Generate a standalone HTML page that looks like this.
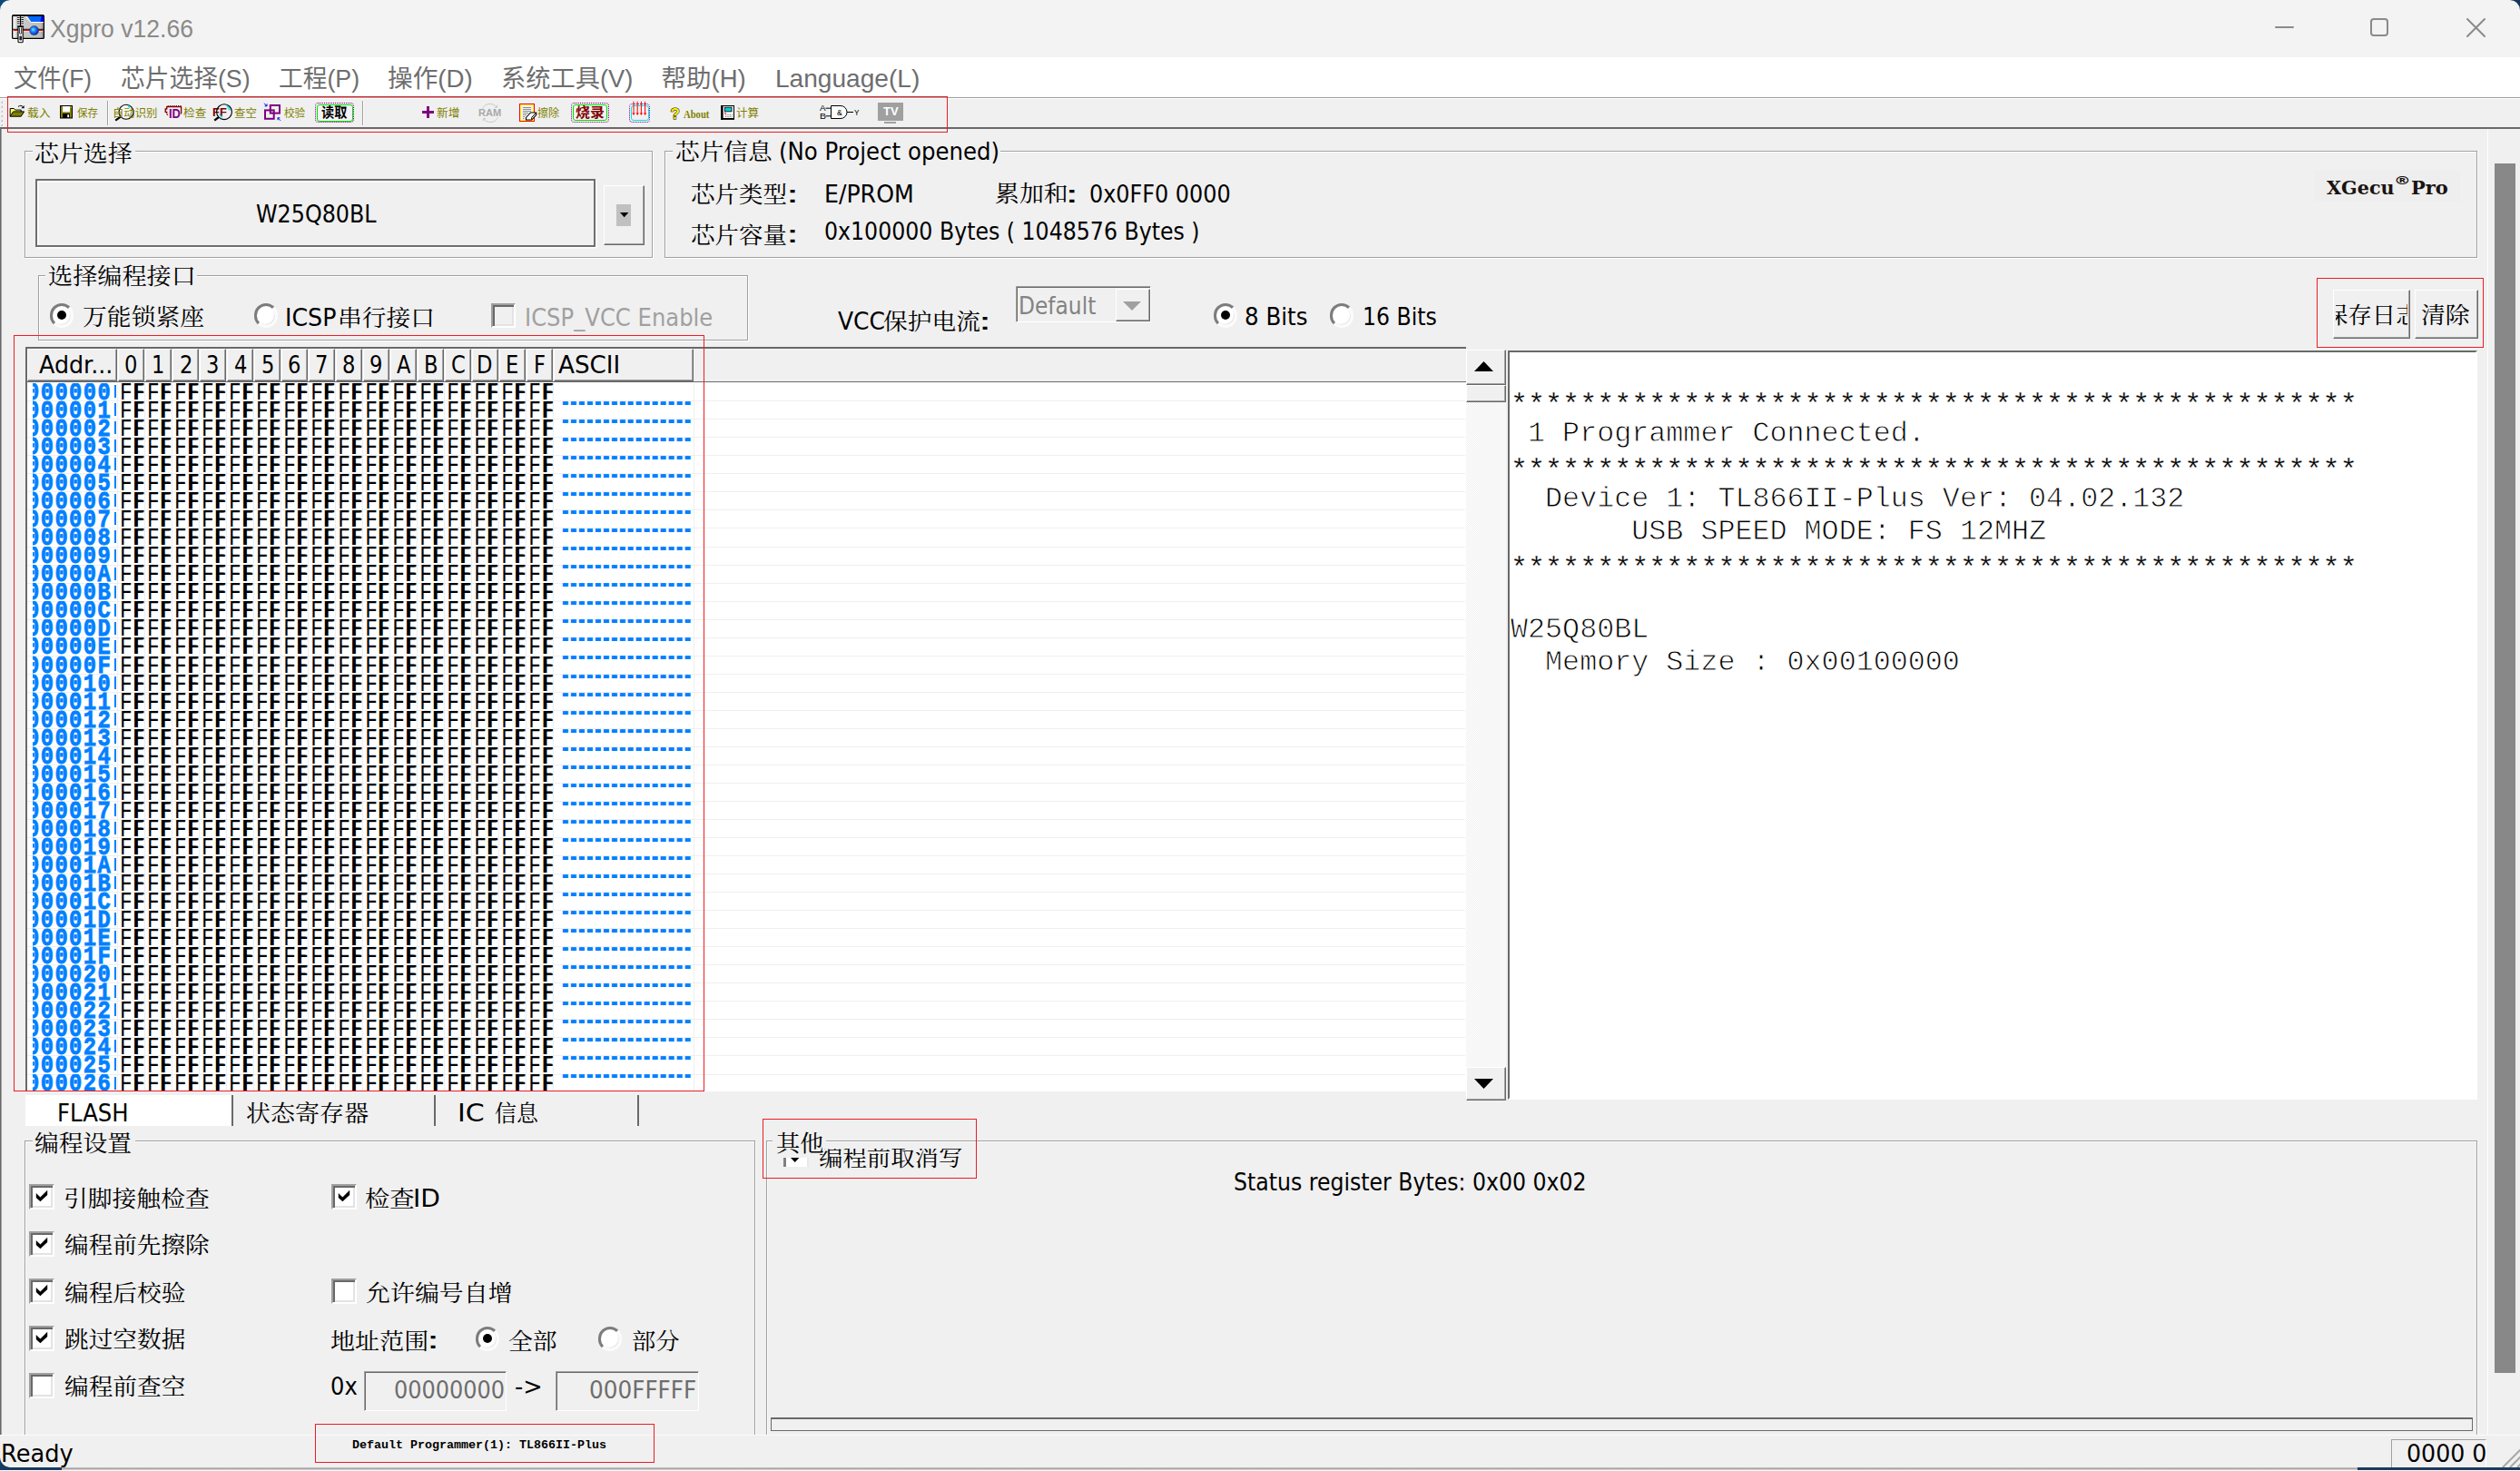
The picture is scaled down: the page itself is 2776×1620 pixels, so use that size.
<!DOCTYPE html>
<html lang="zh"><head><meta charset="utf-8"><title>Xgpro v12.66</title>
<style>
html,body{margin:0;padding:0}
body{width:2776px;height:1620px;overflow:hidden;background:#f0f0f0;position:relative;font-family:'DejaVu Sans','Liberation Sans',sans-serif}
div{position:absolute;box-sizing:border-box}
.t{white-space:pre;line-height:1;margin-top:-80px;transform-origin:0 80px}
.t::before{content:"";display:inline-block;height:80px;width:0}
.grp{border:1px solid #a0a0a0;box-shadow:1px 1px 0 #fff,inset 1px 1px 0 #fff}
.lab{background:#f0f0f0}
.sunk{border:2px solid #6e6e6e;box-shadow:1.5px 1.5px 0 #fff,inset 1.5px 1.5px 0 #fff}
.sunk1{border:1px solid;border-color:#a0a0a0 #fff #fff #a0a0a0;box-shadow:inset 1px 1px 0 #696969}
.btn{background:#f0f0f0;border:1px solid;border-color:#fff #696969 #696969 #fff;box-shadow:inset -1px -1px 0 #a0a0a0}
.red{border:1px solid #ed1c24}
.hd{background:#f0f0f0;border:1px solid;border-color:#fff #696969 #696969 #fff;box-shadow:inset -1px -1px 0 #a0a0a0}
.radio{border-radius:50%;background:#fff;border:3px solid;border-color:#7c7c7c #fbfbfb #fbfbfb #7c7c7c;box-shadow:inset -1px -1px 0 #e6e6e6}
.radio i{position:absolute;left:50%;top:50%;width:10px;height:10px;margin:-5px 0 0 -5px;border-radius:50%;background:#000}
.cb{background:#fff;border:2px solid;border-color:#a0a0a0 #fff #fff #a0a0a0;box-shadow:inset 2px 2px 0 #696969,inset -2px -2px 0 #e3e3e3}
svg{position:absolute;overflow:visible}

.lg{font-family:'Liberation Mono',monospace;font-size:31.73px;color:#000;-webkit-text-stroke:.85px #fff}
.st{-webkit-text-stroke:.25px #fff}
.row{left:0;width:740px;height:26px}
.row .t{top:18.8px}
.adc{left:5.5px;top:0;width:92px;height:22px;overflow:hidden}
.ad{left:-6.5px;font-family:'Liberation Mono',monospace;font-weight:700;font-size:27px;color:#0080ff;-webkit-text-stroke:.8px #0080ff;transform:scaleX(.88);letter-spacing:1.64px}
.hx{left:102px;font-family:'Liberation Mono',monospace;font-size:27px;color:#000;transform:scaleX(.845);letter-spacing:1.549px}
.hx b{font-weight:400;display:inline-block;transform:scaleX(.84);transform-origin:0 0;margin-left:-1.2px;margin-right:1.2px;text-shadow:1.4px 0 0 #000,2.8px 0 0 #000}
.row .as{left:580.3px;top:24.8px;font-family:'Liberation Mono',monospace;font-weight:700;font-size:26.7px;color:#0080ff;letter-spacing:-10.4px;transform:scaleX(1.6)}
.bar{position:absolute;left:96px;top:3px;width:1.5px;height:14px;background:#0080ff}
</style></head>
<body>
<div style="left:0px;top:0px;width:2776px;height:63px;background:#f3f3f3"></div>
<div style="left:0px;top:63px;width:2776px;height:44px;background:#fff"></div>
<div style="left:0px;top:107px;width:2776px;height:1px;background:#a0a0a0"></div>
<div style="left:0px;top:108px;width:2776px;height:1px;background:#fff"></div>
<div style="left:0px;top:140px;width:2776px;height:2px;background:#696969"></div>
<div style="left:0px;top:142px;width:1px;height:1438px;background:#696969"></div>
<div style="left:1px;top:142px;width:1px;height:1438px;background:#a0a0a0"></div>
<div style="left:2740px;top:142px;width:1px;height:1438px;background:#fff"></div>
<div style="left:2748px;top:180px;width:23px;height:1332px;background:#888"></div>
<svg style="left:11px;top:13px" width="42" height="37" viewBox="11 13 42 37">
<defs><linearGradient id="gb" x1="0" x2="1" y1="0" y2="0"><stop offset="0" stop-color="#f4f4f4"/><stop offset=".1" stop-color="#e8e8e8"/><stop offset=".16" stop-color="#a8a8a8"/><stop offset=".42" stop-color="#c8c8c8"/><stop offset=".9" stop-color="#bdbdbd"/><stop offset="1" stop-color="#8a8a8a"/></linearGradient>
<radialGradient id="gs" cx=".4" cy=".4" r=".65"><stop offset="0" stop-color="#7fe6ff"/><stop offset=".35" stop-color="#1f8fff"/><stop offset=".8" stop-color="#0a3fd8"/><stop offset="1" stop-color="#08206a"/></radialGradient></defs>
<rect x="12" y="15" width="38" height="29" rx="2" fill="#fff"/><rect x="18" y="40" width="9.6" height="8.4" rx="1.5" fill="#fff"/>
<rect x="13.6" y="16.6" width="34.8" height="25.8" rx="1.2" fill="url(#gb)" stroke="#000" stroke-width="1.3"/>
<rect x="14" y="16" width="34" height="1.9" fill="#000"/>
<path d="M30.5 17.9H48V24H33.8z" fill="#0068ff"/><path d="M45.6 17.9H48V24H44.4z" fill="#0000f0"/><path d="M33.8 24H48v1H34.4z" fill="#fffdf0"/>
<path d="M28.3 18l5.4 6.2" stroke="#f0f0f0" stroke-width="1.2"/>
<rect x="14" y="31.8" width="34" height="1" fill="#111"/><rect x="15" y="32.9" width="32" height="1.2" fill="#ff0000"/><rect x="15" y="34.1" width="32" height=".8" fill="#d8f0f0"/>
<circle cx="37.6" cy="33.6" r="5" fill="url(#gs)" stroke="#3a2a20" stroke-width=".5"/>
<rect x="18.8" y="17.9" width="7.4" height="10.6" fill="#fff"/>
<path d="M19 19.4h2.6M19 21.6h2.6M19 23.8h2.6M19 26h2.6M23.4 19.4h2.6M23.4 21.6h2.6M23.4 23.8h2.6M23.4 26h2.6" stroke="#000" stroke-width="1"/><rect x="21.9" y="17.9" width="1.3" height="10.6" fill="#000"/>
<path d="M18.8 28.2h7.4l-1.6 2h-4.2z" fill="#000"/>
<path d="M20 29.4h5.2v16.6q0 .8-.8.8h-3.6q-.8 0-.8-.8z" fill="#fff" stroke="#000" stroke-width="1.1"/>
<path d="M21.6 30.5v6.4q1 1 2 0v-6.4" fill="none" stroke="#000" stroke-width=".8"/><rect x="21.4" y="39.6" width="2.6" height="5" rx="1" fill="#222"/>
</svg>
<div class="t" style="left:54.53px;top:40.50px;font-family:'Liberation Sans','Noto Sans CJK SC',sans-serif;font-size:27.5px;color:#8a8a8a;transform:scaleX(0.9660);">Xgpro v12.66</div>
<svg style="left:2490px;top:10px" width="270" height="44" viewBox="2490 10 270 44" fill="none" stroke="#8a8a8a" stroke-width="2" stroke-linecap="round"><path d="M2507 30H2526"/><rect x="2612" y="21" width="18" height="18" rx="3"/><path d="M2718 21L2737 40M2737 21L2718 40"/></svg>
<div class="t" style="left:14.55px;top:95.50px;font-family:'Liberation Sans','Noto Sans CJK SC',sans-serif;font-size:27.5px;color:#6e6e6e;transform:scaleX(0.9545);">文件(F)</div>
<div class="t" style="left:133.03px;top:95.50px;font-family:'Liberation Sans','Noto Sans CJK SC',sans-serif;font-size:27.5px;color:#6e6e6e;transform:scaleX(0.9722);">芯片选择(S)</div>
<div class="t" style="left:307.03px;top:95.50px;font-family:'Liberation Sans','Noto Sans CJK SC',sans-serif;font-size:27.5px;color:#6e6e6e;transform:scaleX(0.9719);">工程(P)</div>
<div class="t" style="left:426.99px;top:95.50px;font-family:'Liberation Sans','Noto Sans CJK SC',sans-serif;font-size:27.5px;color:#6e6e6e;transform:scaleX(1.0055);">操作(D)</div>
<div class="t" style="left:551.77px;top:95.50px;font-family:'Liberation Sans','Noto Sans CJK SC',sans-serif;font-size:27.5px;color:#6e6e6e;transform:scaleX(0.9913);">系统工具(V)</div>
<div class="t" style="left:728.50px;top:95.50px;font-family:'Liberation Sans','Noto Sans CJK SC',sans-serif;font-size:27.5px;color:#6e6e6e;">帮助(H)</div>
<div class="t" style="left:853.71px;top:95.50px;font-family:'Liberation Sans','Noto Sans CJK SC',sans-serif;font-size:27.5px;color:#6e6e6e;transform:scaleX(1.0214);">Language(L)</div>
<svg style="left:0;top:0" width="10" height="145" fill="#b4b4b4"><path d="M0.8 113.5l2.2 -2.2v2.2z"/><path d="M0.8 118.55l2.2 -2.2v2.2z"/><path d="M0.8 123.6l2.2 -2.2v2.2z"/><path d="M0.8 128.65l2.2 -2.2v2.2z"/><path d="M0.8 133.7l2.2 -2.2v2.2z"/><path d="M0.8 138.75l2.2 -2.2v2.2z"/></svg>
<svg style="left:10px;top:114px" width="19" height="17" viewBox="0 0 19 17">
<path d="M1.2 14.2V5.5h4.2l1.4 1.6h6.4v2.2" fill="#ffff66" stroke="#000" stroke-width="1"/>
<path d="M1.2 14.2L4.6 8.9H16.6L13.2 14.2Z" fill="#808000" stroke="#000" stroke-width="1"/>
<path d="M10 3.6c1.6-1.7 4-1.6 5.6.3" fill="none" stroke="#000" stroke-width="1"/><path d="M16.6 2v3.2h-3.2z" fill="#000"/>
</svg>
<div class="t" style="left:29.94px;top:129.30px;font-family:'Liberation Sans','Noto Sans CJK SC',sans-serif;font-size:12px;color:#808000;transform:scaleX(1.0636);">载入</div>
<svg style="left:66px;top:116px" width="14" height="14.5" viewBox="0 0 14 14.5">
<rect x="0.5" y="0.5" width="13" height="13.5" fill="#808000" stroke="#000"/>
<rect x="3" y="1" width="8" height="6.3" fill="#fff"/><rect x="3" y="9" width="8" height="5" fill="#000"/><rect x="8.3" y="10.2" width="1.8" height="3" fill="#fff"/><rect x="11.6" y="1.5" width="1" height="1" fill="#fff"/>
</svg>
<div class="t" style="left:85.30px;top:129.30px;font-family:'Liberation Sans','Noto Sans CJK SC',sans-serif;font-size:12px;color:#808000;transform:scaleX(0.9583);">保存</div>
<div style="left:118px;top:111px;width:1px;height:27px;background:#a0a0a0"></div>
<div style="left:119px;top:111px;width:1px;height:27px;background:#fff"></div>
<svg style="left:125px;top:113px" width="26" height="22" viewBox="125 113 26 22">
<circle cx="139" cy="123.3" r="8" fill="#f6f6f6" stroke="#000" stroke-width="1.1"/><path d="M141 116.2l1.8 2.2" stroke="#00e5ee" stroke-width="1.6"/><path d="M132.8 128.6L127.2 132.6" stroke="#000" stroke-width="2.2"/></svg>
<div class="t" style="left:123.74px;top:129.30px;font-family:'Liberation Sans','Noto Sans CJK SC',sans-serif;font-size:12px;color:#808000;transform:scaleX(1.0311);">自动识别</div>
<svg style="left:181px;top:115px" width="20" height="15" viewBox="181 115 20 15">
<path d="M199.6 125.6V117.7H183.7V120H182.2V123.4H183.7V125.2M183.7 126.4h1.4" fill="none" stroke="#800000" stroke-width="1.3"/>
<path d="M184.6 116.5H199.4" fill="none" stroke="#800000" stroke-width="1.1" stroke-dasharray="1.2 1.1"/>
</svg>
<div class="t" style="left:185.55px;top:130.00px;font-family:'Liberation Sans',sans-serif;font-size:15.2px;color:#800080;font-weight:700;transform:scaleX(0.8500);">ID</div>
<div class="t" style="left:201.75px;top:129.30px;font-family:'Liberation Sans','Noto Sans CJK SC',sans-serif;font-size:12px;color:#808000;transform:scaleX(1.0545);">检查</div>
<div class="t" style="left:233.84px;top:127.80px;font-family:'Liberation Sans',sans-serif;font-size:13.5px;color:#800000;font-weight:700;transform:scaleX(0.9600);">FF</div>
<svg style="left:233px;top:113px" width="26" height="22" viewBox="233 113 26 22">
<circle cx="247" cy="123.2" r="8.4" fill="none" stroke="#000" stroke-width="1.1"/><path d="M249.6 116.4c2 1.2 3 3 3.4 5" stroke="#00e5ee" stroke-width="1.6" fill="none"/><path d="M241.7 125.5c.6 1.6 1.7 3 3.2 3.8" stroke="#00e5ee" stroke-width="1.2" fill="none"/><path d="M241 129L236.2 132.6" stroke="#000" stroke-width="2.2"/></svg>
<div class="t" style="left:257.96px;top:129.30px;font-family:'Liberation Sans','Noto Sans CJK SC',sans-serif;font-size:12px;color:#808000;transform:scaleX(1.0364);">查空</div>
<svg style="left:290px;top:113px" width="21" height="21" viewBox="290 113 21 21">
<rect x="297.8" y="116" width="10.2" height="8.6" fill="none" stroke="#800080" stroke-width="2"/><rect x="292" y="121.4" width="9.7" height="9.4" fill="none" stroke="#800080" stroke-width="2"/>
<path d="M291 113.8l3 3m0-2.4v2.4h-2.4" stroke="#0000ff" stroke-width="1" fill="none"/><path d="M309 132.8l-3-3m0 2.4v-2.4h2.4" stroke="#0000ff" stroke-width="1" fill="none"/></svg>
<div class="t" style="left:312.80px;top:129.30px;font-family:'Liberation Sans','Noto Sans CJK SC',sans-serif;font-size:12px;color:#808000;transform:scaleX(0.9667);">校验</div>
<div style="left:347px;top:113px;width:43px;height:22px;border:1.5px dotted #800080;border-radius:4px"></div>
<div style="left:348.5px;top:114.5px;width:40px;height:19px;border:1px solid #00e000;border-radius:3px;background:#f4f4f4"></div>
<div class="t" style="left:354.30px;top:129.00px;font-family:'Liberation Sans','Noto Sans CJK SC',sans-serif;font-size:14.5px;color:#000;font-weight:700;transform:scaleX(0.9759);">读取</div>
<div style="left:399px;top:111px;width:1px;height:27px;background:#a0a0a0"></div>
<div style="left:400px;top:111px;width:1px;height:27px;background:#fff"></div>
<div style="left:465px;top:122px;width:13px;height:3px;background:#800080"></div>
<div style="left:470px;top:117px;width:3px;height:13px;background:#800080"></div>
<div class="t" style="left:480.64px;top:129.30px;font-family:'Liberation Sans','Noto Sans CJK SC',sans-serif;font-size:12px;color:#808000;transform:scaleX(1.0591);">新增</div>
<svg style="left:527px;top:113px" width="26" height="23" viewBox="527 113 26 23">
<path d="M531.5 119.5a9.3 9.3 0 0 1 15.5-1.6M548.5 129.5a9.3 9.3 0 0 1 -15.5 1.6" fill="none" stroke="#c8c8c8" stroke-width="1"/><path d="M547.6 115.6v2.8h-2.8M532.4 133.4v-2.8h2.8" fill="none" stroke="#c8c8c8" stroke-width="1"/></svg>
<div class="t" style="left:526.79px;top:128.00px;font-family:'Liberation Sans',sans-serif;font-size:11px;color:#a8a8a8;font-weight:700;transform:scaleX(1.0083);">RAM</div>
<div style="left:572px;top:114px;width:17px;height:20px;border:1px solid #ff0000;background:#f0f0f0;box-shadow:inset 0 0 0 1px #ffff00"></div>
<svg style="left:572px;top:114px" width="21" height="21" viewBox="572 114 21 21">
<path d="M576 118.5h9M576 120.5h9M576 122.5h9M576 124.5h6M576 126.5h4M576 128.5h2M576 130.5h1.5" stroke="#909090" stroke-width="1"/>
<path d="M579.5 129.5l5-5.5h6.2v2.5l-5 5.5h-6.2z" fill="#fff" stroke="#000" stroke-width="1.1"/><path d="M585.7 131.5v-2.2l5-5.3" fill="none" stroke="#000" stroke-width="1"/></svg>
<div class="t" style="left:591.79px;top:129.30px;font-family:'Liberation Sans','Noto Sans CJK SC',sans-serif;font-size:12px;color:#808000;transform:scaleX(1.0087);">擦除</div>
<div style="left:629px;top:113px;width:41.5px;height:21.5px;border:1.5px dotted #800080;border-radius:4px"></div>
<div style="left:630.5px;top:114.5px;width:38.5px;height:18.5px;border:1px solid #00e000;border-radius:3px;background:#f4f4f4"></div>
<div class="t" style="left:634.20px;top:129.00px;font-family:'Liberation Sans','Noto Sans CJK SC',sans-serif;font-size:14.5px;color:#800000;font-weight:700;transform:scaleX(1.1000);">烧录</div>
<div style="left:693px;top:114px;width:23px;height:20.5px;border:1.5px dotted #800080;border-radius:4px"></div>
<div style="left:694.5px;top:115.5px;width:20px;height:17.5px;border:1px solid #00e5ee;border-radius:3px"></div>
<svg style="left:693px;top:111px" width="23" height="18" viewBox="693 111 23 18" stroke="#ff0000" stroke-width="1" fill="none"><path d="M698 111.8V126"/><path d="M698 127l-1.6-2.6h3.2z" fill="#ff0000" stroke="none"/><path d="M702.2 111.8V126"/><path d="M702.2 127l-1.6-2.6h3.2z" fill="#ff0000" stroke="none"/><path d="M706.4 111.8V126"/><path d="M706.4 127l-1.6-2.6h3.2z" fill="#ff0000" stroke="none"/><path d="M710.6 111.8V126"/><path d="M710.6 127l-1.6-2.6h3.2z" fill="#ff0000" stroke="none"/></svg>
<div class="t" style="left:738.50px;top:130.50px;font-family:'Liberation Sans',sans-serif;font-size:17px;color:#ffee00;font-weight:700;-webkit-text-stroke:1px #000;paint-order:stroke fill;">?</div>
<div class="t" style="left:753.30px;top:129.80px;font-family:'Liberation Serif',serif;font-size:11.5px;color:#808000;font-weight:700;transform:scaleX(0.9258);">About</div>
<svg style="left:794px;top:116px" width="15" height="16" viewBox="794 116 15 16">
<rect x="795" y="116.5" width="13.5" height="14.5" fill="#f4f4f4" stroke="#000" stroke-width="1"/><rect x="794" y="116" width="2.6" height="15.8" fill="#000"/><rect x="794" y="130" width="15" height="1.8" fill="#000"/>
<rect x="798.5" y="118.2" width="7.5" height="4.6" fill="#00d0d8" stroke="#000" stroke-width=".8"/><rect x="798" y="124.2" width="2" height="1" fill="#ff0000"/>
<path d="M799 126.5h8M799 128.5h8" stroke="#808080" stroke-width="1" stroke-dasharray="1.2 1.2"/></svg>
<div class="t" style="left:810.95px;top:129.30px;font-family:'Liberation Sans','Noto Sans CJK SC',sans-serif;font-size:12px;color:#808000;transform:scaleX(1.0455);">计算</div>
<svg style="left:902px;top:114px" width="46" height="19" viewBox="902 114 46 19">
<path d="M915.5 116.5h10.5a7 7 0 0 1 0 14h-10.5z" fill="#fff" stroke="#000" stroke-width="1"/><path d="M909.5 119.2h6M909.5 127.8h6M933 123.5h7" stroke="#000" stroke-width="1"/></svg>
<div class="t" style="left:903.30px;top:121.80px;font-family:'Liberation Sans',sans-serif;font-size:9.5px;color:#000;transform:scaleX(1.0333);">A</div>
<div class="t" style="left:902.90px;top:130.70px;font-family:'Liberation Sans',sans-serif;font-size:9.5px;color:#000;transform:scaleX(1.1000);">B</div>
<div class="t" style="left:921.70px;top:127.00px;font-family:'Liberation Sans',sans-serif;font-size:8.5px;color:#000;transform:scaleX(1.0167);">&amp;</div>
<div class="t" style="left:940.80px;top:127.00px;font-family:'Liberation Sans',sans-serif;font-size:9.5px;color:#000;transform:scaleX(0.8667);">Y</div>
<div style="left:967px;top:113px;width:28px;height:20px;background:#a0a0a0"></div>
<div style="left:974px;top:134px;width:13px;height:2px;background:#a0a0a0"></div>
<div class="t" style="left:973.30px;top:127.30px;font-family:'Liberation Sans',sans-serif;font-size:12.5px;color:#fff;font-weight:700;transform:scaleX(1.0438);">TV</div>
<div class="grp" style="left:27px;top:166px;width:692px;height:118px;"></div>
<div class="lab" style="left:35.5px;top:164px;width:113.5px;height:5px;"></div>
<div class="t" style="left:38.42px;top:178.00px;font-family:'Liberation Serif','Noto Serif CJK SC',serif;font-size:25px;color:#000;transform:scaleX(1.0765);">芯片选择</div>
<div class="sunk" style="left:39.4px;top:197px;width:616.6px;height:75px;"></div>
<div class="t" style="left:281.58px;top:245.00px;font-family:'DejaVu Sans','Liberation Sans',sans-serif;font-size:26px;color:#000;transform:scaleX(0.9167);">W25Q80BL</div>
<div class="btn" style="left:665px;top:204.3px;width:45px;height:65.7px;"></div>
<div style="left:679px;top:225px;width:16px;height:24px;background:#c0c0c0"></div>
<svg style="left:682.8px;top:234px" width="9.4" height="5.2"><path d="M0 0H9.4L4.7 5.2Z" fill="#000"/></svg>
<div class="grp" style="left:732px;top:166px;width:1997px;height:118px;"></div>
<div class="lab" style="left:741px;top:164px;width:361px;height:5px;"></div>
<div class="t" style="left:743.93px;top:175.75px;font-family:'Liberation Serif','Noto Serif CJK SC',serif;font-size:25px;color:#000;transform:scaleX(1.0663);">芯片信息</div>
<div class="t" style="left:858.12px;top:176.25px;font-family:'DejaVu Sans','Liberation Sans',sans-serif;font-size:26px;color:#000;transform:scaleX(0.9400);">(No Project opened)</div>
<div class="t" style="left:760.94px;top:223.00px;font-family:'Liberation Serif','Noto Serif CJK SC',serif;font-size:25px;color:#000;transform:scaleX(1.0612);">芯片类型</div>
<div class="t" style="left:865.00px;top:222.50px;font-family:'DejaVu Sans','Liberation Sans',sans-serif;font-size:26px;color:#000;transform:scaleX(1.8333);">:</div>
<div class="t" style="left:908.06px;top:222.50px;font-family:'DejaVu Sans','Liberation Sans',sans-serif;font-size:26px;color:#000;transform:scaleX(0.9694);">E/PROM</div>
<div class="t" style="left:1096.42px;top:222.00px;font-family:'Liberation Serif','Noto Serif CJK SC',serif;font-size:25px;color:#000;transform:scaleX(1.0764);">累加和</div>
<div class="t" style="left:1172.00px;top:222.50px;font-family:'DejaVu Sans','Liberation Sans',sans-serif;font-size:26px;color:#000;transform:scaleX(2.0000);">:</div>
<div class="t" style="left:1200.16px;top:222.50px;font-family:'DejaVu Sans','Liberation Sans',sans-serif;font-size:26px;color:#000;transform:scaleX(0.9187);">0x0FF0 0000</div>
<div class="t" style="left:760.94px;top:268.00px;font-family:'Liberation Serif','Noto Serif CJK SC',serif;font-size:25px;color:#000;transform:scaleX(1.0612);">芯片容量</div>
<div class="t" style="left:865.00px;top:267.00px;font-family:'DejaVu Sans','Liberation Sans',sans-serif;font-size:26px;color:#000;transform:scaleX(1.8333);">:</div>
<div class="t" style="left:908.18px;top:263.75px;font-family:'DejaVu Sans','Liberation Sans',sans-serif;font-size:26px;color:#000;transform:scaleX(0.9100);">0x100000 Bytes ( 1048576 Bytes )</div>
<div style="left:2550px;top:187px;width:160px;height:35px;background:#eeeeee"></div>
<div class="t" style="left:2563.00px;top:214.00px;font-family:'DejaVu Serif','Liberation Serif',serif;font-size:21px;color:#1a1311;font-weight:700;transform:scaleX(0.9867);">XGecu</div>
<div class="t" style="left:2637.11px;top:203.00px;font-family:'DejaVu Sans','Liberation Sans',sans-serif;font-size:13px;color:#1a1311;font-weight:700;transform:scaleX(1.4444);">®</div>
<div class="t" style="left:2656.00px;top:214.00px;font-family:'DejaVu Serif','Liberation Serif',serif;font-size:21px;color:#1a1311;font-weight:700;">Pro</div>
<div class="grp" style="left:42px;top:303px;width:782px;height:72px;"></div>
<div class="lab" style="left:50px;top:301px;width:166.5px;height:5px;"></div>
<div class="t" style="left:52.91px;top:313.00px;font-family:'Liberation Serif','Noto Serif CJK SC',serif;font-size:25px;color:#000;transform:scaleX(1.0856);">选择编程接口</div>
<div class="radio" style="left:54.6px;top:334.2px;width:26.5px;height:26.5px;"><i></i></div>
<div class="t" style="left:91.43px;top:358.00px;font-family:'Liberation Serif','Noto Serif CJK SC',serif;font-size:25px;color:#000;transform:scaleX(1.0732);">万能锁紧座</div>
<div class="radio" style="left:279.6px;top:334.2px;width:26.5px;height:26.5px;"></div>
<div class="t" style="left:314.05px;top:358.50px;font-family:'DejaVu Sans','Liberation Sans',sans-serif;font-size:26px;color:#000;transform:scaleX(0.9727);">ICSP</div>
<div class="t" style="left:372.29px;top:359.00px;font-family:'Liberation Serif','Noto Serif CJK SC',serif;font-size:25px;color:#000;transform:scaleX(1.0691);">串行接口</div>
<div class="cb" style="left:541px;top:334px;width:27px;height:27px;background:#f0f0f0"></div>
<div class="t" style="left:577.63px;top:358.50px;font-family:'DejaVu Sans','Liberation Sans',sans-serif;font-size:26px;color:#a0a0a0;transform:scaleX(0.9338);">ICSP_VCC Enable</div>
<div class="t" style="left:922.50px;top:362.50px;font-family:'DejaVu Sans','Liberation Sans',sans-serif;font-size:26px;color:#000;transform:scaleX(0.9623);">VCC</div>
<div class="t" style="left:973.43px;top:363.00px;font-family:'Liberation Serif','Noto Serif CJK SC',serif;font-size:25px;color:#000;transform:scaleX(1.0714);">保护电流</div>
<div class="t" style="left:1076.50px;top:362.50px;font-family:'DejaVu Sans','Liberation Sans',sans-serif;font-size:26px;color:#000;transform:scaleX(1.8333);">:</div>
<div class="sunk1" style="left:1119px;top:315px;width:149px;height:40px;"></div>
<div class="btn" style="left:1229px;top:317.5px;width:38px;height:36.5px;"></div>
<svg style="left:1237px;top:332px" width="20" height="10"><path d="M0 0H20L10 10Z" fill="#a0a0a0"/></svg>
<div class="t" style="left:1122.20px;top:345.50px;font-family:'DejaVu Sans','Liberation Sans',sans-serif;font-size:26px;color:#838383;transform:scaleX(0.8978);">Default</div>
<div class="radio" style="left:1336.6px;top:334.2px;width:26.5px;height:26.5px;"><i></i></div>
<div class="t" style="left:1371.11px;top:357.50px;font-family:'DejaVu Sans','Liberation Sans',sans-serif;font-size:26px;color:#000;transform:scaleX(0.9429);">8 Bits</div>
<div class="radio" style="left:1464.6px;top:334.2px;width:26.5px;height:26.5px;"></div>
<div class="t" style="left:1501.28px;top:357.50px;font-family:'DejaVu Sans','Liberation Sans',sans-serif;font-size:26px;color:#000;transform:scaleX(0.9070);">16 Bits</div>
<div class="btn" style="left:2570px;top:319px;width:85px;height:53.5px;overflow:hidden"></div>
<div style="left:2573px;top:322px;width:79px;height:48px;overflow:hidden"><div class="t" style="left:-13.5px;top:33.5px;font-family:'Liberation Serif','Noto Serif CJK SC',serif;font-size:25px;transform:scaleX(1.056)">保存日志</div></div>
<div class="btn" style="left:2660px;top:319px;width:70px;height:53.5px;"></div>
<div class="t" style="left:2667.43px;top:355.70px;font-family:'Liberation Serif','Noto Serif CJK SC',serif;font-size:25px;color:#000;transform:scaleX(1.0729);">清除</div>
<div style="left:28px;top:382px;width:1587px;height:820px;background:#fff;border-left:2px solid #696969;border-top:2px solid #696969"></div>
<div style="left:30px;top:384px;width:1585px;height:36.5px;background:#f0f0f0;border-bottom:1px solid #696969"></div>
<div class="hd" style="left:30px;top:384px;width:99px;height:36px;"></div>
<div class="hd" style="left:129.5px;top:384px;width:29.4px;height:36px;"></div>
<div class="hd" style="left:159.5px;top:384px;width:29.4px;height:36px;"></div>
<div class="hd" style="left:189.5px;top:384px;width:29.4px;height:36px;"></div>
<div class="hd" style="left:219.5px;top:384px;width:29.4px;height:36px;"></div>
<div class="hd" style="left:249.5px;top:384px;width:29.4px;height:36px;"></div>
<div class="hd" style="left:279.5px;top:384px;width:29.4px;height:36px;"></div>
<div class="hd" style="left:309.5px;top:384px;width:29.4px;height:36px;"></div>
<div class="hd" style="left:339.5px;top:384px;width:29.4px;height:36px;"></div>
<div class="hd" style="left:369.5px;top:384px;width:29.4px;height:36px;"></div>
<div class="hd" style="left:399.5px;top:384px;width:29.4px;height:36px;"></div>
<div class="hd" style="left:429.5px;top:384px;width:29.4px;height:36px;"></div>
<div class="hd" style="left:459.5px;top:384px;width:29.4px;height:36px;"></div>
<div class="hd" style="left:489.5px;top:384px;width:29.4px;height:36px;"></div>
<div class="hd" style="left:519.5px;top:384px;width:29.4px;height:36px;"></div>
<div class="hd" style="left:549.5px;top:384px;width:29.4px;height:36px;"></div>
<div class="hd" style="left:579.5px;top:384px;width:29.4px;height:36px;"></div>
<div class="hd" style="left:609.5px;top:384px;width:154px;height:36px;"></div>
<div class="t" style="left:43.00px;top:411.20px;font-family:'DejaVu Sans','Liberation Sans',sans-serif;font-size:26px;color:#000;transform:scaleX(0.9753);">Addr...</div>
<div class="t" style="left:137.10px;top:411.20px;font-family:'DejaVu Sans','Liberation Sans',sans-serif;font-size:26px;color:#000;transform:scaleX(0.8700);">0</div>
<div class="t" style="left:167.10px;top:411.20px;font-family:'DejaVu Sans','Liberation Sans',sans-serif;font-size:26px;color:#000;transform:scaleX(0.8700);">1</div>
<div class="t" style="left:197.54px;top:411.20px;font-family:'DejaVu Sans','Liberation Sans',sans-serif;font-size:26px;color:#000;transform:scaleX(0.8700);">2</div>
<div class="t" style="left:227.10px;top:411.20px;font-family:'DejaVu Sans','Liberation Sans',sans-serif;font-size:26px;color:#000;transform:scaleX(0.8700);">3</div>
<div class="t" style="left:257.54px;top:411.20px;font-family:'DejaVu Sans','Liberation Sans',sans-serif;font-size:26px;color:#000;transform:scaleX(0.8700);">4</div>
<div class="t" style="left:287.54px;top:411.20px;font-family:'DejaVu Sans','Liberation Sans',sans-serif;font-size:26px;color:#000;transform:scaleX(0.8700);">5</div>
<div class="t" style="left:317.11px;top:411.20px;font-family:'DejaVu Sans','Liberation Sans',sans-serif;font-size:26px;color:#000;transform:scaleX(0.8700);">6</div>
<div class="t" style="left:347.11px;top:411.20px;font-family:'DejaVu Sans','Liberation Sans',sans-serif;font-size:26px;color:#000;transform:scaleX(0.8700);">7</div>
<div class="t" style="left:377.11px;top:411.20px;font-family:'DejaVu Sans','Liberation Sans',sans-serif;font-size:26px;color:#000;transform:scaleX(0.8700);">8</div>
<div class="t" style="left:407.11px;top:411.20px;font-family:'DejaVu Sans','Liberation Sans',sans-serif;font-size:26px;color:#000;transform:scaleX(0.8700);">9</div>
<div class="t" style="left:436.67px;top:411.20px;font-family:'DejaVu Sans','Liberation Sans',sans-serif;font-size:26px;color:#000;transform:scaleX(0.8700);">A</div>
<div class="t" style="left:466.67px;top:411.20px;font-family:'DejaVu Sans','Liberation Sans',sans-serif;font-size:26px;color:#000;transform:scaleX(0.8700);">B</div>
<div class="t" style="left:496.67px;top:411.20px;font-family:'DejaVu Sans','Liberation Sans',sans-serif;font-size:26px;color:#000;transform:scaleX(0.8700);">C</div>
<div class="t" style="left:525.37px;top:411.20px;font-family:'DejaVu Sans','Liberation Sans',sans-serif;font-size:26px;color:#000;transform:scaleX(0.8700);">D</div>
<div class="t" style="left:557.11px;top:411.20px;font-family:'DejaVu Sans','Liberation Sans',sans-serif;font-size:26px;color:#000;transform:scaleX(0.8700);">E</div>
<div class="t" style="left:587.54px;top:411.20px;font-family:'DejaVu Sans','Liberation Sans',sans-serif;font-size:26px;color:#000;transform:scaleX(0.8700);">F</div>
<div class="t" style="left:615.00px;top:411.20px;font-family:'DejaVu Sans','Liberation Sans',sans-serif;font-size:26px;color:#000;transform:scaleX(1.0077);">ASCII</div>
<div style="left:30px;top:441.24px;width:1584px;height:1px;background:#efefef"></div><div style="left:30px;top:461.27px;width:1584px;height:1px;background:#efefef"></div><div style="left:30px;top:481.31px;width:1584px;height:1px;background:#efefef"></div><div style="left:30px;top:501.34px;width:1584px;height:1px;background:#efefef"></div><div style="left:30px;top:521.38px;width:1584px;height:1px;background:#efefef"></div><div style="left:30px;top:541.41px;width:1584px;height:1px;background:#efefef"></div><div style="left:30px;top:561.44px;width:1584px;height:1px;background:#efefef"></div><div style="left:30px;top:581.48px;width:1584px;height:1px;background:#efefef"></div><div style="left:30px;top:601.51px;width:1584px;height:1px;background:#efefef"></div><div style="left:30px;top:621.55px;width:1584px;height:1px;background:#efefef"></div><div style="left:30px;top:641.59px;width:1584px;height:1px;background:#efefef"></div><div style="left:30px;top:661.62px;width:1584px;height:1px;background:#efefef"></div><div style="left:30px;top:681.65px;width:1584px;height:1px;background:#efefef"></div><div style="left:30px;top:701.69px;width:1584px;height:1px;background:#efefef"></div><div style="left:30px;top:721.72px;width:1584px;height:1px;background:#efefef"></div><div style="left:30px;top:741.76px;width:1584px;height:1px;background:#efefef"></div><div style="left:30px;top:761.80px;width:1584px;height:1px;background:#efefef"></div><div style="left:30px;top:781.83px;width:1584px;height:1px;background:#efefef"></div><div style="left:30px;top:801.87px;width:1584px;height:1px;background:#efefef"></div><div style="left:30px;top:821.90px;width:1584px;height:1px;background:#efefef"></div><div style="left:30px;top:841.93px;width:1584px;height:1px;background:#efefef"></div><div style="left:30px;top:861.97px;width:1584px;height:1px;background:#efefef"></div><div style="left:30px;top:882.00px;width:1584px;height:1px;background:#efefef"></div><div style="left:30px;top:902.04px;width:1584px;height:1px;background:#efefef"></div><div style="left:30px;top:922.08px;width:1584px;height:1px;background:#efefef"></div><div style="left:30px;top:942.11px;width:1584px;height:1px;background:#efefef"></div><div style="left:30px;top:962.14px;width:1584px;height:1px;background:#efefef"></div><div style="left:30px;top:982.18px;width:1584px;height:1px;background:#efefef"></div><div style="left:30px;top:1002.21px;width:1584px;height:1px;background:#efefef"></div><div style="left:30px;top:1022.25px;width:1584px;height:1px;background:#efefef"></div><div style="left:30px;top:1042.29px;width:1584px;height:1px;background:#efefef"></div><div style="left:30px;top:1062.32px;width:1584px;height:1px;background:#efefef"></div><div style="left:30px;top:1082.36px;width:1584px;height:1px;background:#efefef"></div><div style="left:30px;top:1102.39px;width:1584px;height:1px;background:#efefef"></div><div style="left:30px;top:1122.42px;width:1584px;height:1px;background:#efefef"></div><div style="left:30px;top:1142.46px;width:1584px;height:1px;background:#efefef"></div><div style="left:30px;top:1162.49px;width:1584px;height:1px;background:#efefef"></div><div style="left:30px;top:1182.53px;width:1584px;height:1px;background:#efefef"></div><div style="left:129.00px;top:422px;width:1px;height:780px;background:#efefef"></div><div style="left:159.00px;top:422px;width:1px;height:780px;background:#efefef"></div><div style="left:189.00px;top:422px;width:1px;height:780px;background:#efefef"></div><div style="left:219.00px;top:422px;width:1px;height:780px;background:#efefef"></div><div style="left:249.00px;top:422px;width:1px;height:780px;background:#efefef"></div><div style="left:279.00px;top:422px;width:1px;height:780px;background:#efefef"></div><div style="left:309.00px;top:422px;width:1px;height:780px;background:#efefef"></div><div style="left:339.00px;top:422px;width:1px;height:780px;background:#efefef"></div><div style="left:369.00px;top:422px;width:1px;height:780px;background:#efefef"></div><div style="left:399.00px;top:422px;width:1px;height:780px;background:#efefef"></div><div style="left:429.00px;top:422px;width:1px;height:780px;background:#efefef"></div><div style="left:459.00px;top:422px;width:1px;height:780px;background:#efefef"></div><div style="left:489.00px;top:422px;width:1px;height:780px;background:#efefef"></div><div style="left:519.00px;top:422px;width:1px;height:780px;background:#efefef"></div><div style="left:549.00px;top:422px;width:1px;height:780px;background:#efefef"></div><div style="left:579.00px;top:422px;width:1px;height:780px;background:#efefef"></div><div style="left:609.00px;top:422px;width:1px;height:780px;background:#efefef"></div><div style="left:764.2px;top:422px;width:1px;height:780px;background:#efefef"></div>
<div style="left:30px;top:422px;width:740px;height:780px;overflow:hidden"><div class="row" style="top:-0.80px"><div class="adc"><div class="ad t">000000</div></div><i class="bar"></i><div class="hx t">F<b>F</b>F<b>F</b>F<b>F</b>F<b>F</b>F<b>F</b>F<b>F</b>F<b>F</b>F<b>F</b>F<b>F</b>F<b>F</b>F<b>F</b>F<b>F</b>F<b>F</b>F<b>F</b>F<b>F</b>F<b>F</b></div><div class="as t">................</div></div><div class="row" style="top:19.24px"><div class="adc"><div class="ad t">000001</div></div><i class="bar"></i><div class="hx t">F<b>F</b>F<b>F</b>F<b>F</b>F<b>F</b>F<b>F</b>F<b>F</b>F<b>F</b>F<b>F</b>F<b>F</b>F<b>F</b>F<b>F</b>F<b>F</b>F<b>F</b>F<b>F</b>F<b>F</b>F<b>F</b></div><div class="as t">................</div></div><div class="row" style="top:39.27px"><div class="adc"><div class="ad t">000002</div></div><i class="bar"></i><div class="hx t">F<b>F</b>F<b>F</b>F<b>F</b>F<b>F</b>F<b>F</b>F<b>F</b>F<b>F</b>F<b>F</b>F<b>F</b>F<b>F</b>F<b>F</b>F<b>F</b>F<b>F</b>F<b>F</b>F<b>F</b>F<b>F</b></div><div class="as t">................</div></div><div class="row" style="top:59.31px"><div class="adc"><div class="ad t">000003</div></div><i class="bar"></i><div class="hx t">F<b>F</b>F<b>F</b>F<b>F</b>F<b>F</b>F<b>F</b>F<b>F</b>F<b>F</b>F<b>F</b>F<b>F</b>F<b>F</b>F<b>F</b>F<b>F</b>F<b>F</b>F<b>F</b>F<b>F</b>F<b>F</b></div><div class="as t">................</div></div><div class="row" style="top:79.34px"><div class="adc"><div class="ad t">000004</div></div><i class="bar"></i><div class="hx t">F<b>F</b>F<b>F</b>F<b>F</b>F<b>F</b>F<b>F</b>F<b>F</b>F<b>F</b>F<b>F</b>F<b>F</b>F<b>F</b>F<b>F</b>F<b>F</b>F<b>F</b>F<b>F</b>F<b>F</b>F<b>F</b></div><div class="as t">................</div></div><div class="row" style="top:99.38px"><div class="adc"><div class="ad t">000005</div></div><i class="bar"></i><div class="hx t">F<b>F</b>F<b>F</b>F<b>F</b>F<b>F</b>F<b>F</b>F<b>F</b>F<b>F</b>F<b>F</b>F<b>F</b>F<b>F</b>F<b>F</b>F<b>F</b>F<b>F</b>F<b>F</b>F<b>F</b>F<b>F</b></div><div class="as t">................</div></div><div class="row" style="top:119.41px"><div class="adc"><div class="ad t">000006</div></div><i class="bar"></i><div class="hx t">F<b>F</b>F<b>F</b>F<b>F</b>F<b>F</b>F<b>F</b>F<b>F</b>F<b>F</b>F<b>F</b>F<b>F</b>F<b>F</b>F<b>F</b>F<b>F</b>F<b>F</b>F<b>F</b>F<b>F</b>F<b>F</b></div><div class="as t">................</div></div><div class="row" style="top:139.44px"><div class="adc"><div class="ad t">000007</div></div><i class="bar"></i><div class="hx t">F<b>F</b>F<b>F</b>F<b>F</b>F<b>F</b>F<b>F</b>F<b>F</b>F<b>F</b>F<b>F</b>F<b>F</b>F<b>F</b>F<b>F</b>F<b>F</b>F<b>F</b>F<b>F</b>F<b>F</b>F<b>F</b></div><div class="as t">................</div></div><div class="row" style="top:159.48px"><div class="adc"><div class="ad t">000008</div></div><i class="bar"></i><div class="hx t">F<b>F</b>F<b>F</b>F<b>F</b>F<b>F</b>F<b>F</b>F<b>F</b>F<b>F</b>F<b>F</b>F<b>F</b>F<b>F</b>F<b>F</b>F<b>F</b>F<b>F</b>F<b>F</b>F<b>F</b>F<b>F</b></div><div class="as t">................</div></div><div class="row" style="top:179.51px"><div class="adc"><div class="ad t">000009</div></div><i class="bar"></i><div class="hx t">F<b>F</b>F<b>F</b>F<b>F</b>F<b>F</b>F<b>F</b>F<b>F</b>F<b>F</b>F<b>F</b>F<b>F</b>F<b>F</b>F<b>F</b>F<b>F</b>F<b>F</b>F<b>F</b>F<b>F</b>F<b>F</b></div><div class="as t">................</div></div><div class="row" style="top:199.55px"><div class="adc"><div class="ad t">00000A</div></div><i class="bar"></i><div class="hx t">F<b>F</b>F<b>F</b>F<b>F</b>F<b>F</b>F<b>F</b>F<b>F</b>F<b>F</b>F<b>F</b>F<b>F</b>F<b>F</b>F<b>F</b>F<b>F</b>F<b>F</b>F<b>F</b>F<b>F</b>F<b>F</b></div><div class="as t">................</div></div><div class="row" style="top:219.59px"><div class="adc"><div class="ad t">00000B</div></div><i class="bar"></i><div class="hx t">F<b>F</b>F<b>F</b>F<b>F</b>F<b>F</b>F<b>F</b>F<b>F</b>F<b>F</b>F<b>F</b>F<b>F</b>F<b>F</b>F<b>F</b>F<b>F</b>F<b>F</b>F<b>F</b>F<b>F</b>F<b>F</b></div><div class="as t">................</div></div><div class="row" style="top:239.62px"><div class="adc"><div class="ad t">00000C</div></div><i class="bar"></i><div class="hx t">F<b>F</b>F<b>F</b>F<b>F</b>F<b>F</b>F<b>F</b>F<b>F</b>F<b>F</b>F<b>F</b>F<b>F</b>F<b>F</b>F<b>F</b>F<b>F</b>F<b>F</b>F<b>F</b>F<b>F</b>F<b>F</b></div><div class="as t">................</div></div><div class="row" style="top:259.65px"><div class="adc"><div class="ad t">00000D</div></div><i class="bar"></i><div class="hx t">F<b>F</b>F<b>F</b>F<b>F</b>F<b>F</b>F<b>F</b>F<b>F</b>F<b>F</b>F<b>F</b>F<b>F</b>F<b>F</b>F<b>F</b>F<b>F</b>F<b>F</b>F<b>F</b>F<b>F</b>F<b>F</b></div><div class="as t">................</div></div><div class="row" style="top:279.69px"><div class="adc"><div class="ad t">00000E</div></div><i class="bar"></i><div class="hx t">F<b>F</b>F<b>F</b>F<b>F</b>F<b>F</b>F<b>F</b>F<b>F</b>F<b>F</b>F<b>F</b>F<b>F</b>F<b>F</b>F<b>F</b>F<b>F</b>F<b>F</b>F<b>F</b>F<b>F</b>F<b>F</b></div><div class="as t">................</div></div><div class="row" style="top:299.72px"><div class="adc"><div class="ad t">00000F</div></div><i class="bar"></i><div class="hx t">F<b>F</b>F<b>F</b>F<b>F</b>F<b>F</b>F<b>F</b>F<b>F</b>F<b>F</b>F<b>F</b>F<b>F</b>F<b>F</b>F<b>F</b>F<b>F</b>F<b>F</b>F<b>F</b>F<b>F</b>F<b>F</b></div><div class="as t">................</div></div><div class="row" style="top:319.76px"><div class="adc"><div class="ad t">000010</div></div><i class="bar"></i><div class="hx t">F<b>F</b>F<b>F</b>F<b>F</b>F<b>F</b>F<b>F</b>F<b>F</b>F<b>F</b>F<b>F</b>F<b>F</b>F<b>F</b>F<b>F</b>F<b>F</b>F<b>F</b>F<b>F</b>F<b>F</b>F<b>F</b></div><div class="as t">................</div></div><div class="row" style="top:339.80px"><div class="adc"><div class="ad t">000011</div></div><i class="bar"></i><div class="hx t">F<b>F</b>F<b>F</b>F<b>F</b>F<b>F</b>F<b>F</b>F<b>F</b>F<b>F</b>F<b>F</b>F<b>F</b>F<b>F</b>F<b>F</b>F<b>F</b>F<b>F</b>F<b>F</b>F<b>F</b>F<b>F</b></div><div class="as t">................</div></div><div class="row" style="top:359.83px"><div class="adc"><div class="ad t">000012</div></div><i class="bar"></i><div class="hx t">F<b>F</b>F<b>F</b>F<b>F</b>F<b>F</b>F<b>F</b>F<b>F</b>F<b>F</b>F<b>F</b>F<b>F</b>F<b>F</b>F<b>F</b>F<b>F</b>F<b>F</b>F<b>F</b>F<b>F</b>F<b>F</b></div><div class="as t">................</div></div><div class="row" style="top:379.87px"><div class="adc"><div class="ad t">000013</div></div><i class="bar"></i><div class="hx t">F<b>F</b>F<b>F</b>F<b>F</b>F<b>F</b>F<b>F</b>F<b>F</b>F<b>F</b>F<b>F</b>F<b>F</b>F<b>F</b>F<b>F</b>F<b>F</b>F<b>F</b>F<b>F</b>F<b>F</b>F<b>F</b></div><div class="as t">................</div></div><div class="row" style="top:399.90px"><div class="adc"><div class="ad t">000014</div></div><i class="bar"></i><div class="hx t">F<b>F</b>F<b>F</b>F<b>F</b>F<b>F</b>F<b>F</b>F<b>F</b>F<b>F</b>F<b>F</b>F<b>F</b>F<b>F</b>F<b>F</b>F<b>F</b>F<b>F</b>F<b>F</b>F<b>F</b>F<b>F</b></div><div class="as t">................</div></div><div class="row" style="top:419.93px"><div class="adc"><div class="ad t">000015</div></div><i class="bar"></i><div class="hx t">F<b>F</b>F<b>F</b>F<b>F</b>F<b>F</b>F<b>F</b>F<b>F</b>F<b>F</b>F<b>F</b>F<b>F</b>F<b>F</b>F<b>F</b>F<b>F</b>F<b>F</b>F<b>F</b>F<b>F</b>F<b>F</b></div><div class="as t">................</div></div><div class="row" style="top:439.97px"><div class="adc"><div class="ad t">000016</div></div><i class="bar"></i><div class="hx t">F<b>F</b>F<b>F</b>F<b>F</b>F<b>F</b>F<b>F</b>F<b>F</b>F<b>F</b>F<b>F</b>F<b>F</b>F<b>F</b>F<b>F</b>F<b>F</b>F<b>F</b>F<b>F</b>F<b>F</b>F<b>F</b></div><div class="as t">................</div></div><div class="row" style="top:460.00px"><div class="adc"><div class="ad t">000017</div></div><i class="bar"></i><div class="hx t">F<b>F</b>F<b>F</b>F<b>F</b>F<b>F</b>F<b>F</b>F<b>F</b>F<b>F</b>F<b>F</b>F<b>F</b>F<b>F</b>F<b>F</b>F<b>F</b>F<b>F</b>F<b>F</b>F<b>F</b>F<b>F</b></div><div class="as t">................</div></div><div class="row" style="top:480.04px"><div class="adc"><div class="ad t">000018</div></div><i class="bar"></i><div class="hx t">F<b>F</b>F<b>F</b>F<b>F</b>F<b>F</b>F<b>F</b>F<b>F</b>F<b>F</b>F<b>F</b>F<b>F</b>F<b>F</b>F<b>F</b>F<b>F</b>F<b>F</b>F<b>F</b>F<b>F</b>F<b>F</b></div><div class="as t">................</div></div><div class="row" style="top:500.08px"><div class="adc"><div class="ad t">000019</div></div><i class="bar"></i><div class="hx t">F<b>F</b>F<b>F</b>F<b>F</b>F<b>F</b>F<b>F</b>F<b>F</b>F<b>F</b>F<b>F</b>F<b>F</b>F<b>F</b>F<b>F</b>F<b>F</b>F<b>F</b>F<b>F</b>F<b>F</b>F<b>F</b></div><div class="as t">................</div></div><div class="row" style="top:520.11px"><div class="adc"><div class="ad t">00001A</div></div><i class="bar"></i><div class="hx t">F<b>F</b>F<b>F</b>F<b>F</b>F<b>F</b>F<b>F</b>F<b>F</b>F<b>F</b>F<b>F</b>F<b>F</b>F<b>F</b>F<b>F</b>F<b>F</b>F<b>F</b>F<b>F</b>F<b>F</b>F<b>F</b></div><div class="as t">................</div></div><div class="row" style="top:540.14px"><div class="adc"><div class="ad t">00001B</div></div><i class="bar"></i><div class="hx t">F<b>F</b>F<b>F</b>F<b>F</b>F<b>F</b>F<b>F</b>F<b>F</b>F<b>F</b>F<b>F</b>F<b>F</b>F<b>F</b>F<b>F</b>F<b>F</b>F<b>F</b>F<b>F</b>F<b>F</b>F<b>F</b></div><div class="as t">................</div></div><div class="row" style="top:560.18px"><div class="adc"><div class="ad t">00001C</div></div><i class="bar"></i><div class="hx t">F<b>F</b>F<b>F</b>F<b>F</b>F<b>F</b>F<b>F</b>F<b>F</b>F<b>F</b>F<b>F</b>F<b>F</b>F<b>F</b>F<b>F</b>F<b>F</b>F<b>F</b>F<b>F</b>F<b>F</b>F<b>F</b></div><div class="as t">................</div></div><div class="row" style="top:580.21px"><div class="adc"><div class="ad t">00001D</div></div><i class="bar"></i><div class="hx t">F<b>F</b>F<b>F</b>F<b>F</b>F<b>F</b>F<b>F</b>F<b>F</b>F<b>F</b>F<b>F</b>F<b>F</b>F<b>F</b>F<b>F</b>F<b>F</b>F<b>F</b>F<b>F</b>F<b>F</b>F<b>F</b></div><div class="as t">................</div></div><div class="row" style="top:600.25px"><div class="adc"><div class="ad t">00001E</div></div><i class="bar"></i><div class="hx t">F<b>F</b>F<b>F</b>F<b>F</b>F<b>F</b>F<b>F</b>F<b>F</b>F<b>F</b>F<b>F</b>F<b>F</b>F<b>F</b>F<b>F</b>F<b>F</b>F<b>F</b>F<b>F</b>F<b>F</b>F<b>F</b></div><div class="as t">................</div></div><div class="row" style="top:620.29px"><div class="adc"><div class="ad t">00001F</div></div><i class="bar"></i><div class="hx t">F<b>F</b>F<b>F</b>F<b>F</b>F<b>F</b>F<b>F</b>F<b>F</b>F<b>F</b>F<b>F</b>F<b>F</b>F<b>F</b>F<b>F</b>F<b>F</b>F<b>F</b>F<b>F</b>F<b>F</b>F<b>F</b></div><div class="as t">................</div></div><div class="row" style="top:640.32px"><div class="adc"><div class="ad t">000020</div></div><i class="bar"></i><div class="hx t">F<b>F</b>F<b>F</b>F<b>F</b>F<b>F</b>F<b>F</b>F<b>F</b>F<b>F</b>F<b>F</b>F<b>F</b>F<b>F</b>F<b>F</b>F<b>F</b>F<b>F</b>F<b>F</b>F<b>F</b>F<b>F</b></div><div class="as t">................</div></div><div class="row" style="top:660.36px"><div class="adc"><div class="ad t">000021</div></div><i class="bar"></i><div class="hx t">F<b>F</b>F<b>F</b>F<b>F</b>F<b>F</b>F<b>F</b>F<b>F</b>F<b>F</b>F<b>F</b>F<b>F</b>F<b>F</b>F<b>F</b>F<b>F</b>F<b>F</b>F<b>F</b>F<b>F</b>F<b>F</b></div><div class="as t">................</div></div><div class="row" style="top:680.39px"><div class="adc"><div class="ad t">000022</div></div><i class="bar"></i><div class="hx t">F<b>F</b>F<b>F</b>F<b>F</b>F<b>F</b>F<b>F</b>F<b>F</b>F<b>F</b>F<b>F</b>F<b>F</b>F<b>F</b>F<b>F</b>F<b>F</b>F<b>F</b>F<b>F</b>F<b>F</b>F<b>F</b></div><div class="as t">................</div></div><div class="row" style="top:700.42px"><div class="adc"><div class="ad t">000023</div></div><i class="bar"></i><div class="hx t">F<b>F</b>F<b>F</b>F<b>F</b>F<b>F</b>F<b>F</b>F<b>F</b>F<b>F</b>F<b>F</b>F<b>F</b>F<b>F</b>F<b>F</b>F<b>F</b>F<b>F</b>F<b>F</b>F<b>F</b>F<b>F</b></div><div class="as t">................</div></div><div class="row" style="top:720.46px"><div class="adc"><div class="ad t">000024</div></div><i class="bar"></i><div class="hx t">F<b>F</b>F<b>F</b>F<b>F</b>F<b>F</b>F<b>F</b>F<b>F</b>F<b>F</b>F<b>F</b>F<b>F</b>F<b>F</b>F<b>F</b>F<b>F</b>F<b>F</b>F<b>F</b>F<b>F</b>F<b>F</b></div><div class="as t">................</div></div><div class="row" style="top:740.49px"><div class="adc"><div class="ad t">000025</div></div><i class="bar"></i><div class="hx t">F<b>F</b>F<b>F</b>F<b>F</b>F<b>F</b>F<b>F</b>F<b>F</b>F<b>F</b>F<b>F</b>F<b>F</b>F<b>F</b>F<b>F</b>F<b>F</b>F<b>F</b>F<b>F</b>F<b>F</b>F<b>F</b></div><div class="as t">................</div></div><div class="row" style="top:760.53px"><div class="adc"><div class="ad t">000026</div></div><i class="bar"></i><div class="hx t">F<b>F</b>F<b>F</b>F<b>F</b>F<b>F</b>F<b>F</b>F<b>F</b>F<b>F</b>F<b>F</b>F<b>F</b>F<b>F</b>F<b>F</b>F<b>F</b>F<b>F</b>F<b>F</b>F<b>F</b>F<b>F</b></div><div class="as t">................</div></div></div>
<div style="left:1614.5px;top:385px;width:44.5px;height:827px;background:repeating-conic-gradient(#ffffff 0 25%,#f0f0f0 0 50%) 0 0/2px 2px"></div>
<div class="btn" style="left:1614.5px;top:385px;width:44.5px;height:38.5px;"></div>
<svg style="left:1624px;top:397.5px" width="21" height="11"><path d="M0 11H21L10.5 0Z" fill="#000"/></svg>
<div class="btn" style="left:1614.5px;top:423.5px;width:44.5px;height:19px;"></div>
<div class="btn" style="left:1614.5px;top:1174.5px;width:44.5px;height:37.5px;"></div>
<svg style="left:1624px;top:1188px" width="21" height="11"><path d="M0 0H21L10.5 11Z" fill="#000"/></svg>
<div style="left:1661px;top:385.5px;width:1068px;height:825px;background:#fff;border:2px solid;border-color:#696969 #fff #fff #696969"></div>
<div class="t lg st" style="left:1664.00px;top:454.80px">*************************************************</div>
<div class="t lg" style="left:1664.00px;top:486.00px"> 1 Programmer Connected.</div>
<div class="t lg st" style="left:1664.00px;top:526.80px">*************************************************</div>
<div class="t lg" style="left:1664.00px;top:558.00px">  Device 1: TL866II-Plus Ver: 04.02.132</div>
<div class="t lg" style="left:1664.00px;top:594.00px">       USB SPEED MODE: FS 12MHZ</div>
<div class="t lg st" style="left:1664.00px;top:634.80px">*************************************************</div>
<div class="t lg" style="left:1664.00px;top:702.00px">W25Q80BL</div>
<div class="t lg" style="left:1664.00px;top:738.00px">  Memory Size : 0x00100000</div>
<div style="left:28px;top:1206px;width:226.5px;height:33.5px;background:#fff"></div>
<div style="left:254.5px;top:1206px;width:2px;height:33.5px;background:#696969"></div>
<div style="left:477.5px;top:1206px;width:2px;height:33.5px;background:#696969"></div>
<div style="left:701.5px;top:1206px;width:2px;height:33.5px;background:#696969"></div>
<div class="t" style="left:63.13px;top:1235.00px;font-family:'DejaVu Sans','Liberation Sans',sans-serif;font-size:26px;color:#000;transform:scaleX(0.9367);">FLASH</div>
<div class="t" style="left:270.92px;top:1234.50px;font-family:'Liberation Serif','Noto Serif CJK SC',serif;font-size:25px;color:#000;transform:scaleX(1.0813);">状态寄存器</div>
<div class="t" style="left:503.70px;top:1235.00px;font-family:'DejaVu Sans','Liberation Sans',sans-serif;font-size:26px;color:#000;transform:scaleX(1.1522);">IC</div>
<div class="t" style="left:545.04px;top:1234.50px;font-family:'Liberation Serif','Noto Serif CJK SC',serif;font-size:25px;color:#000;transform:scaleX(0.9583);">信息</div>
<div class="grp" style="left:27px;top:1256px;width:805px;height:340px;"></div>
<div class="lab" style="left:35.5px;top:1254px;width:113px;height:5px;"></div>
<div class="t" style="left:38.43px;top:1268.00px;font-family:'Liberation Serif','Noto Serif CJK SC',serif;font-size:25px;color:#000;transform:scaleX(1.0714);">编程设置</div>
<div class="grp" style="left:843.5px;top:1256px;width:1885.5px;height:340px;"></div>
<div class="lab" style="left:851.6px;top:1254px;width:58.4px;height:5px;"></div>
<div class="t" style="left:854.55px;top:1268.00px;font-family:'Liberation Serif','Noto Serif CJK SC',serif;font-size:25px;color:#000;transform:scaleX(1.0500);">其他</div>
<div class="cb" style="left:32px;top:1304px;width:28px;height:28px;"><svg style="left:0;top:0" width="24" height="24" viewBox="0 0 24 24"><path d="M5.8 8L10.4 12.6L18.2 4.8V10L10.4 17.2L5.8 13Z" fill="#000"/></svg></div>
<div class="t" style="left:69.86px;top:1329.00px;font-family:'Liberation Serif','Noto Serif CJK SC',serif;font-size:25px;color:#000;transform:scaleX(1.0714);">引脚接触检查</div>
<div class="cb" style="left:32px;top:1356px;width:28px;height:28px;"><svg style="left:0;top:0" width="24" height="24" viewBox="0 0 24 24"><path d="M5.8 8L10.4 12.6L18.2 4.8V10L10.4 17.2L5.8 13Z" fill="#000"/></svg></div>
<div class="t" style="left:70.94px;top:1380.00px;font-family:'Liberation Serif','Noto Serif CJK SC',serif;font-size:25px;color:#000;transform:scaleX(1.0642);">编程前先擦除</div>
<div class="cb" style="left:32px;top:1408px;width:28px;height:28px;"><svg style="left:0;top:0" width="24" height="24" viewBox="0 0 24 24"><path d="M5.8 8L10.4 12.6L18.2 4.8V10L10.4 17.2L5.8 13Z" fill="#000"/></svg></div>
<div class="t" style="left:70.93px;top:1433.00px;font-family:'Liberation Serif','Noto Serif CJK SC',serif;font-size:25px;color:#000;transform:scaleX(1.0671);">编程后校验</div>
<div class="cb" style="left:32px;top:1460px;width:28px;height:28px;"><svg style="left:0;top:0" width="24" height="24" viewBox="0 0 24 24"><path d="M5.8 8L10.4 12.6L18.2 4.8V10L10.4 17.2L5.8 13Z" fill="#000"/></svg></div>
<div class="t" style="left:70.93px;top:1484.00px;font-family:'Liberation Serif','Noto Serif CJK SC',serif;font-size:25px;color:#000;transform:scaleX(1.0671);">跳过空数据</div>
<div class="cb" style="left:32px;top:1512px;width:28px;height:28px;"></div>
<div class="t" style="left:70.93px;top:1536.00px;font-family:'Liberation Serif','Noto Serif CJK SC',serif;font-size:25px;color:#000;transform:scaleX(1.0671);">编程前查空</div>
<div class="cb" style="left:365px;top:1304px;width:28px;height:28px;"><svg style="left:0;top:0" width="24" height="24" viewBox="0 0 24 24"><path d="M5.8 8L10.4 12.6L18.2 4.8V10L10.4 17.2L5.8 13Z" fill="#000"/></svg></div>
<div class="t" style="left:401.91px;top:1329.00px;font-family:'Liberation Serif','Noto Serif CJK SC',serif;font-size:25px;color:#000;transform:scaleX(1.0938);">检查</div>
<div class="t" style="left:454.83px;top:1328.50px;font-family:'DejaVu Sans','Liberation Sans',sans-serif;font-size:26px;color:#000;transform:scaleX(1.0833);">ID</div>
<div class="cb" style="left:365px;top:1408px;width:28px;height:28px;"></div>
<div class="t" style="left:402.92px;top:1433.00px;font-family:'Liberation Serif','Noto Serif CJK SC',serif;font-size:25px;color:#000;transform:scaleX(1.0782);">允许编号自增</div>
<div class="t" style="left:364.42px;top:1486.00px;font-family:'Liberation Serif','Noto Serif CJK SC',serif;font-size:25px;color:#000;transform:scaleX(1.0825);">地址范围</div>
<div class="t" style="left:468.50px;top:1485.00px;font-family:'DejaVu Sans','Liberation Sans',sans-serif;font-size:26px;color:#000;transform:scaleX(1.8333);">:</div>
<div class="radio" style="left:523.6px;top:1461.2px;width:26.5px;height:26.5px;"><i></i></div>
<div class="t" style="left:559.93px;top:1486.00px;font-family:'Liberation Serif','Noto Serif CJK SC',serif;font-size:25px;color:#000;transform:scaleX(1.0729);">全部</div>
<div class="radio" style="left:658.6px;top:1461.2px;width:26.5px;height:26.5px;"></div>
<div class="t" style="left:695.95px;top:1486.00px;font-family:'Liberation Serif','Noto Serif CJK SC',serif;font-size:25px;color:#000;transform:scaleX(1.0521);">部分</div>
<div class="t" style="left:363.64px;top:1536.00px;font-family:'DejaVu Sans','Liberation Sans',sans-serif;font-size:26px;color:#000;transform:scaleX(0.9310);">0x</div>
<div class="sunk1" style="left:401px;top:1510px;width:157px;height:44px;"></div>
<div class="t" style="left:433.66px;top:1539.50px;font-family:'DejaVu Sans','Liberation Sans',sans-serif;font-size:26px;color:#6d6d6d;transform:scaleX(0.9225);">00000000</div>
<div class="t" style="left:566.52px;top:1536.00px;font-family:'DejaVu Sans','Liberation Sans',sans-serif;font-size:26px;color:#000;transform:scaleX(0.9821);">-&gt;</div>
<div class="sunk1" style="left:612px;top:1510px;width:157.5px;height:44px;"></div>
<div class="t" style="left:649.10px;top:1539.50px;font-family:'DejaVu Sans','Liberation Sans',sans-serif;font-size:26px;color:#6d6d6d;transform:scaleX(0.9504);">000FFFFF</div>
<div style="left:863px;top:1275px;width:27.5px;height:10px;background:#fff;border-left:3px solid #808080;border-right:2px solid #e8e8e8"></div>
<svg style="left:870.6px;top:1275px" width="9.4" height="5"><path d="M0 0H9.4L4.7 5Z" fill="#000"/></svg>
<div style="left:899px;top:1265px;width:165px;height:22px;overflow:hidden"><div class="t" style="left:3px;top:18.5px;font-family:'Liberation Serif','Noto Serif CJK SC',serif;font-size:25px;transform:scaleX(1.056)">编程前取消写</div></div>
<div class="lab" style="left:851px;top:1244px;width:57px;height:27px;"></div>
<div class="t" style="left:854.55px;top:1268.00px;font-family:'Liberation Serif','Noto Serif CJK SC',serif;font-size:25px;color:#000;transform:scaleX(1.0500);">其他</div>
<div class="t" style="left:1359.18px;top:1311.00px;font-family:'DejaVu Sans','Liberation Sans',sans-serif;font-size:26px;color:#000;transform:scaleX(0.9080);">Status register Bytes: 0x00 0x02</div>
<div style="left:849px;top:1561px;width:1875px;height:15px;border:1px solid #696969;border-top:2px solid #696969;background:#f0f0f0"></div>
<div style="left:0px;top:1580px;width:2776px;height:40px;background:#f0f0f0"></div>
<div style="left:0px;top:1580px;width:2776px;height:1px;background:#fbfbfb"></div>
<div class="t" style="left:0.53px;top:1609.50px;font-family:'DejaVu Sans','Liberation Sans',sans-serif;font-size:26px;color:#000;transform:scaleX(0.9872);">Ready</div>
<div class="t" style="left:388.49px;top:1594.50px;font-family:'Liberation Mono',monospace;font-size:13.27px;color:#000;font-weight:700;transform:scaleX(1.0054);">Default Programmer(1): TL866II-Plus</div>
<div style="left:2634px;top:1584.5px;width:105px;height:33px;border-left:1px solid #a0a0a0;border-top:1px solid #a0a0a0;border-right:1px solid #fff"></div>
<div class="t" style="left:2651.06px;top:1610.25px;font-family:'DejaVu Sans','Liberation Sans',sans-serif;font-size:26px;color:#000;transform:scaleX(0.9716);">0000 0</div>
<svg style="left:2740px;top:1590px" width="36" height="28" viewBox="2740 1590 36 28" stroke="#a9a9a9" stroke-width="2.2"><path d="M2757 1616L2777 1596M2765 1616L2777 1604M2773 1616L2777 1612"/></svg>
<div style="left:0px;top:1616px;width:2597px;height:3px;background:linear-gradient(#c8c8c8,#a8a8a8 50%,#e0e0e0)"></div>
<div style="left:0px;top:1616px;width:68px;height:3px;background:#143c5e"></div>
<svg style="left:0;top:1605px" width="16" height="12"><path d="M0 0Q1 11 15 11.5H0Z" fill="#143c5e"/></svg>
<div style="left:2597px;top:1615.5px;width:179px;height:4px;background:#1c3b5a"></div>
<div style="left:0px;top:1619px;width:2776px;height:1px;background:#fafafa"></div>
<svg style="left:0;top:0" width="12" height="12"><path d="M0 0H11Q1 1 0 11Z" fill="#0a4a78"/></svg>
<svg style="left:2764px;top:0" width="12" height="12"><path d="M12 0H1Q11 1 12 11Z" fill="#16375a"/></svg>
<div class="red" style="left:8px;top:106px;width:1036px;height:40px;"></div>
<div class="red" style="left:14.5px;top:369px;width:761.5px;height:832.5px;"></div>
<div class="red" style="left:2552px;top:306px;width:184px;height:77px;"></div>
<div class="red" style="left:840px;top:1232px;width:235.5px;height:66px;"></div>
<div class="red" style="left:347px;top:1568px;width:374px;height:42.5px;"></div>
</body></html>
